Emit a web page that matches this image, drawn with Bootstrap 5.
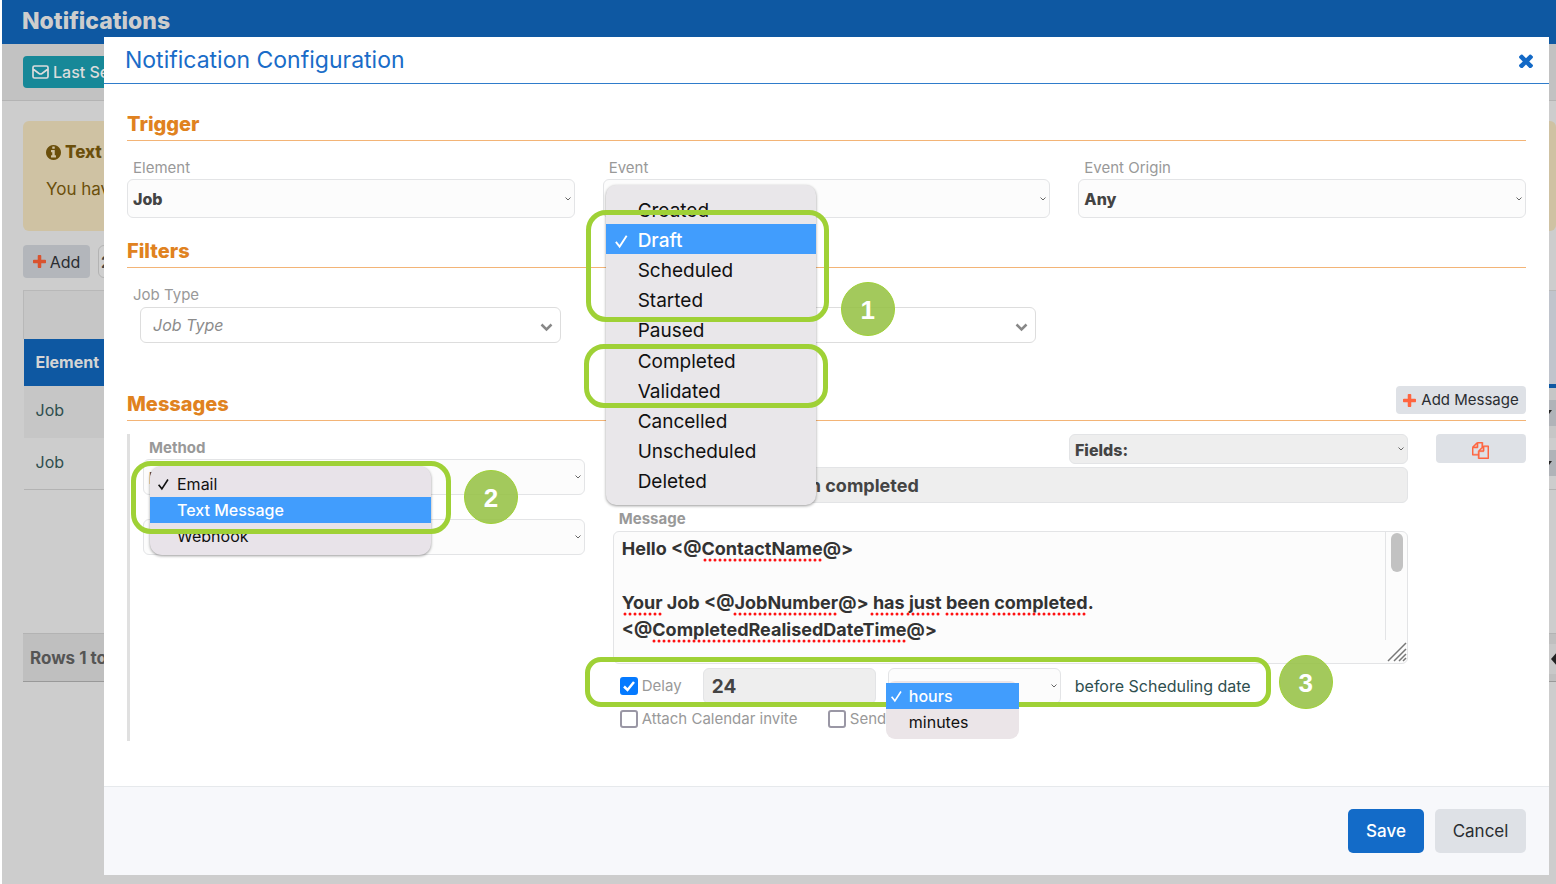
<!DOCTYPE html>
<html lang="en">
<head>
<meta charset="utf-8">
<meta name="viewport" content="width=device-width, initial-scale=1">
<title>Notifications</title>
<link href="https://cdn.jsdelivr.net/npm/bootstrap@5.3.0/dist/css/bootstrap.min.css" rel="stylesheet">
<style>
  body { font-family: Inter, "Liberation Sans", sans-serif; font-size: 16px; background: #fff; color: #2f4f4f; }
  .page { min-height: 100vh; margin-left: 2px; background: #cdcdcd; position: relative; overflow: hidden; }
  .fa-ico { fill: currentColor; flex: none; }

  /* page behind the dialog */
  .top-bar { height: 44px; background: #0e58a2; color: #cdcdcd; padding: 0 20px; font-size: 23px; font-weight: 800; line-height: 42px; }
  .tool-bar { height: 57px; background: #c2c2c2; border-bottom: 1px solid #b4b4b4; padding: 12px 21px; }
  .btn-teal { background: #178898; color: #dcdcdc; height: 32px; padding: 0 9px; border: 0; border-radius: 4px; font-size: 16px; font-weight: 500; }
  .btn-teal:hover { background: #178898; color: #dcdcdc; }
  .notice { margin: 20px 0 0 21px; height: 110px; padding: 18px 23px; background: #cfc2a3; color: #6b4f0b; border-radius: 6px; font-size: 17px; line-height: 26px; }
  .notice p { margin: 11px 0 0; }
  .notice strong { font-weight: 800; }
  .actions { margin: 14px 0 0 21px; height: 33px; }
  .btn-add { background: #b3b6bb; color: #2a2d31; height: 33px; width: 67px; padding: 0; border: 0; border-radius: 4px; font-size: 16px; }
  .page-size { width: 60px; height: 33px; border: 1px solid #b3b3b3; border-radius: 6px; background: #cfcfcf; color: #444; font-size: 16px; font-weight: 700; padding: 0 2px; }
  .grid-table { margin: 12px 0 0; border-collapse: collapse; width: 100%; table-layout: fixed; }
  .grid-wrap { padding-left: 21px; }
  .grid-table th, .grid-table td { padding: 0 12px; height: 52px; }
  .grid-table td { padding-bottom: 3px; }
  .grid-table .groups th { height: 48px; background: #c6c6c6; border-top: 1px solid #b8b8b8; border-left: 1px solid #b8b8b8; }
  .grid-table .heads th { height: 47px; background: #0e58a2; color: #d4d4d4; font-weight: 700; font-size: 16px; }
  .grid-table .heads th.edge, .grid-table .groups th.edge { background: #c0c4cc; }
  .grid-table .heads th.edge { border-bottom: 4px solid #0e58a2; }
  .grid-table tbody tr:first-child td { background: #c6c6c6; }
  .grid-table tbody tr:last-child td { border-bottom: 1px solid #b3b3b3; }
  .grid-table .edge { width: 8px; padding: 0; }
  .row-btn { display: block; width: 8px; height: 26px; padding: 0; border: 0; background: #b0b3b8; }
  .row-btn svg, .pager svg { display: block; fill: #222; }
  .grid-foot { margin: 143px 0 0 21px; height: 49px; padding: 2px 0 0 7px; background: #bfbfbf; border-top: 1px solid #b3b3b3; border-bottom: 1px solid #999; color: #555; font-size: 17px; font-weight: 700; }
  .pager { border: 0; background: #c8c8c8; width: 7px; height: 30px; padding: 0; }

  /* dialog */
  .dialog-layer { position: absolute; top: 0; left: 0; width: 100%; padding: 37px 7px 9px 102px; z-index: 10; }
  .dialog-box { background: #fff; }
  .dialog-head { height: 47px; padding: 0 16px 0 21px; border-bottom: 1px solid #2f7ccb; color: #1a6cc8; }
  .dialog-head h1 { font-size: 23px; font-weight: 400; line-height: 46px; margin: 0; }
  .close-btn { border: 0; background: none; color: #1369c6; padding: 0; width: 15px; height: 18px; line-height: 1; }
  .dialog-main { padding: 26px 23px 45px; }
  .sect-head { border-bottom: 1px solid #f3b476; padding-bottom: 2px; height: 31px; }
  .sect-filters { margin-top: 19px; }
  .sect-messages { margin-top: 47px; }
  .sect-head h2 { color: #e08220; font-size: 20px; font-weight: 800; line-height: 28px; margin: 0; }
  .cols-3 { display: grid; grid-template-columns: repeat(3, minmax(0, 1fr)); gap: 28px; margin-top: 17px; }
  .lbl { display: block; font-size: 15px; line-height: 20px; color: #999; margin: 0 0 1px 6px; }
  .field-box { position: relative; }
  .ctl { display: block; width: 100%; height: 36px; border: 1px solid #e3e4e6; border-radius: 6px; background-color: #fcfcfc; color: #444; font-size: 16px; font-weight: 800; padding: 1px 5px 0; appearance: none; }
  select.ctl { background-image: url("data:image/svg+xml,%3Csvg xmlns='http://www.w3.org/2000/svg' viewBox='0 0 6 4'%3E%3Cpath d='M.5.5 3 3 5.5.5' fill='none' stroke='%23666'/%3E%3C/svg%3E"); background-repeat: no-repeat; background-position: right 3px center; background-size: 6px 4px; }
  .ctl-tall { height: 39px; }
  .ctl-gray { background-color: #eee; }
  select.ctl.ctl-pick { margin: 2px 14px 0 13px; width: calc(100% - 27px); border-color: #ddd; background-color: #fff; color: #8c8c8c; font-style: italic; font-weight: 400; font-size: 16px; padding: 0 12px; background-position: right 7px top 15px; background-size: 13px 9px; background-image: url("data:image/svg+xml,%3Csvg xmlns='http://www.w3.org/2000/svg' viewBox='0 0 13 9'%3E%3Cpath d='M1.500 1.500 6.500 6.500 11.500 1.500' fill='none' stroke='%23888' stroke-width='2.500'/%3E%3C/svg%3E"); }
  .btn-soft { background: #dee1e6; color: #2a2d31; border: 0; border-radius: 4px; padding: 0; font-size: 16px; }
  .btn-soft:hover { background: #dee1e6; }
  .coral { color: #ff6540; }
  .add-msg { width: 130px; height: 28px; margin-top: -4px; font-size: 15px; gap: 5px; }
  .copy-btn { width: 90px; height: 29px; }
  .copy-btn.coral { color: #ff6540; }

  .msg-card { display: grid; grid-template-columns: minmax(0, 5fr) minmax(0, 9fr) 90px; column-gap: 28px; margin-top: 13px; border-left: 3px solid #e0e0e0; padding-left: 13px; height: 307px; }
  .fields-select { width: 339px; height: 30px; margin-left: auto; }
  .subject { margin-top: 3px; padding: 0 8px; font-size: 18px; font-weight: 700; }
  .msg-lbl { margin-top: 6px; }
  .text-wrap { position: relative; display: flex; height: 133px; border: 1px solid #e3e4e6; border-radius: 6px; background: #fcfcfc; margin-top: 2px; }
  .text-wrap textarea { flex: 1; border: 0; outline: 0; resize: none; overflow: hidden; background: none; padding: 3px 8px; color: #333; font-size: 18px; font-weight: 700; line-height: 27px; }
  .scroll-lane { width: 22px; height: 108px; border-left: 1px solid #e3e4e6; padding: 1px 5px; }
  .scroll-thumb { width: 12px; height: 39px; border-radius: 6px; background: #c2c2c2; }
  .over { position: absolute; }
  .grip { right: 0; bottom: 1px; }
  .spell { left: 0; top: 0; stroke: #f11; stroke-width: 3; stroke-linecap: round; stroke-dasharray: 0 5; pointer-events: none; }
  .delay-row { position: relative; display: flex; align-items: center; margin-top: 4px; height: 35px; padding-left: 7px; }
  .delay-row .ctl { flex: none; width: 173px; }
  .delay-lbl { width: 61px; }
  .delay-row .delay-num { font-size: 19px; font-weight: 700; padding: 1px 8px 0; }
  .unit-box { margin: 0 14px 0 12px; }
  .unit-box select.ctl { padding-top: 11px; }
  .before { white-space: nowrap; }
  .check-row { display: flex; align-items: center; margin-top: 6px; padding-left: 7px; height: 20px; }
  .attach-lbl { width: 186px; }
  .tick { appearance: none; width: 18px; height: 18px; margin: 0 4px 0 0; border: 2px solid #9a97a5; border-radius: 3px; background: #fff; flex: none; }
  .tick:checked { border-color: #057aff; background: #057aff url("data:image/svg+xml,%3Csvg xmlns='http://www.w3.org/2000/svg' viewBox='0 0 14 14'%3E%3Cpath d='m2 7.500 3.500 3.500L12 3' fill='none' stroke='%23fff' stroke-width='2.500'/%3E%3C/svg%3E") center/14px no-repeat; }
  .tick-lbl { font-size: 15px; line-height: 20px; color: #999; }

  /* open option lists */
  .pop { position: absolute; z-index: 5; margin: 0; list-style: none; background: #e8e3e9; color: #111; box-shadow: 0 1px 3px rgba(0,0,0,.4); display: flex; flex-direction: column; }
  .pop li { flex: 1; display: flex; align-items: center; white-space: nowrap; }
  .pop .on { background: #419dfd; color: #fff; font-weight: 500; }
  .pop svg { fill: none; stroke: currentColor; stroke-width: 2; flex: none; }
  .pop .gap-ico { flex: none; }
  .pop-event { left: 3px; top: 6px; width: 210px; height: 320px; padding: 9px 0; border-radius: 10px; background: #e9e7ea; font-size: 19px; line-height: 26px; }
  .pop-event li { padding-top: 3px; }
  .pop-event .gap-ico { width: 32px; padding-left: 8px; }
  .pop-method { left: 7px; top: 7px; width: 281px; height: 89px; padding: 5px 0 6px; border-radius: 12px; font-size: 16px; }
  .pop-method .gap-ico { width: 27px; padding-left: 7px; }
  .pop-unit { left: -2px; top: 13px; width: 133px; height: 58px; padding: 2px 0 4px; border-radius: 9px; background: #ebe5e8; font-size: 16px; box-shadow: none; }
  .pop-unit .gap-ico { width: 23px; padding-left: 4px; }

  /* numbered callouts */
  .ring { position: absolute; z-index: 6; border: 5px solid #9fd136; border-radius: 20px; pointer-events: none; }
  .num { position: absolute; z-index: 6; width: 54px; height: 54px; border: 1px solid #9fd136; border-radius: 50%; background: rgba(150,193,70,.88); color: #fff; font: 700 26px/54px "Liberation Sans", sans-serif; text-align: center; }
  .ring-a { left: -17px; top: 31px; width: 243px; height: 112px; }
  .ring-b { left: -19px; top: 165px; width: 244px; height: 64px; }
  .num-1 { left: 238px; top: 103px; }
  .ring-c { left: -12px; top: 2px; width: 320px; height: 73px; }
  .num-2 { left: 321px; top: 11px; }
  .ring-d { left: -28px; top: -11px; width: 686px; height: 50px; border-radius: 16px; z-index: 4; }
  .num-3 { left: 666px; top: -13px; }

  .dialog-foot { height: 89px; border-top: 1px solid #e6e9ec; background: #f7f8fb; padding: 0 23px; gap: 11px; }
  .foot-btn { height: 44px; border: 0; border-radius: 5px; padding: 1px 0 0; font-size: 17px; }
  .save { width: 76px; background: #136bc8; color: #fff; font-weight: 500; }
  .cancel { width: 91px; background: #dee1e6; color: #2a2d31; }
</style>
</head>
<body>
<svg class="d-none">
  <symbol id="plus" viewBox="192 128 1408 1408"><path d="M1600 736v192q0 40-28 68t-68 28h-416v416q0 40-28 68t-68 28h-192q-40 0-68-28t-28-68v-416h-416q-40 0-68-28t-28-68v-192q0-40 28-68t68-28h416v-416q0-40 28-68t68-28h192q40 0 68 28t28 68v416h416q40 0 68 28t28 68z"/></symbol>
  <symbol id="tickmark" viewBox="0 0 16 16"><path d="M2 9l4 5L13.500 2.500"/></symbol>
</svg>

<div class="page">
  <header class="top-bar">Notifications</header>
  <div class="tool-bar">
    <button type="button" class="btn btn-teal d-inline-flex align-items-center gap-1">
      <svg class="fa-ico" width="17" height="14" viewBox="0 0 17 14"><path d="M1 2.500Q1 1 2.500 1h12Q16 1 16 2.500v9q0 1.500-1.500 1.500h-12Q1 13 1 11.500zM1 4l6 4.500q1.500 1 3 0L16 4" fill="none" stroke="currentColor" stroke-width="1.700"/></svg>
      Last Sent
    </button>
  </div>
  <div class="notice">
    <div class="d-flex align-items-center gap-1">
      <svg class="fa-ico" width="15" height="15" viewBox="128 128 1536 1536"><path d="M1152 1376v-160q0-14-9-23t-23-9h-96v-512q0-14-9-23t-23-9h-320q-14 0-23 9t-9 23v160q0 14 9 23t23 9h96v320h-96q-14 0-23 9t-9 23v160q0 14 9 23t23 9h448q14 0 23-9t9-23zm-128-896v-160q0-14-9-23t-23-9h-192q-14 0-23 9t-9 23v160q0 14 9 23t23 9h192q14 0 23-9t9-23zm640 416q0 209-103 385.500t-279.500 279.500-385.500 103-385.500-103-279.500-279.500-103-385.500 103-385.500 279.500-279.500 385.500-103 385.500 103 279.500 279.500 103 385.500z"/></svg>
      <strong>Text</strong>
    </div>
    <p>You have</p>
  </div>
  <div class="actions d-flex gap-2">
    <button type="button" class="btn btn-add d-flex align-items-center justify-content-center gap-1"><svg class="fa-ico" style="color:#d9532f" width="13" height="13"><use href="#plus"/></svg>Add</button>
    <input class="page-size" value="25" aria-label="Rows per page">
  </div>
  <div class="grid-wrap">
    <table class="grid-table">
      <thead>
        <tr class="groups"><th></th><th class="edge"></th></tr>
        <tr class="heads"><th>Element</th><th class="edge"></th></tr>
      </thead>
      <tbody>
        <tr><td>Job</td><td class="edge"><button type="button" class="row-btn" aria-label="Row actions"><svg width="8" height="5" viewBox="0 0 8 5"><path d="M-2 0h6L1 4z"/></svg></button></td></tr>
        <tr><td>Job</td><td class="edge"><button type="button" class="row-btn" aria-label="Row actions"><svg width="8" height="5" viewBox="0 0 8 5"><path d="M-2 0h6L1 4z"/></svg></button></td></tr>
      </tbody>
    </table>
  </div>
  <div class="grid-foot d-flex align-items-center justify-content-between">Rows 1 to
    <button type="button" class="pager" aria-label="Previous page"><svg width="7" height="14" viewBox="0 0 7 14"><path d="M2 7l6-7v14z"/></svg></button>
  </div>

  <div class="dialog-layer">
    <form class="dialog-box" role="dialog" aria-labelledby="dlg-title">
      <div class="dialog-head d-flex align-items-center justify-content-between">
        <h1 id="dlg-title">Notification Configuration</h1>
        <button type="button" class="close-btn" aria-label="Close"><svg class="fa-ico" width="14" height="14" viewBox="302 434 1188 1188"><path transform="translate(0 100)" d="M1490 1322q0 40-28 68l-136 136q-28 28-68 28t-68-28l-294-294-294 294q-28 28-68 28t-68-28l-136-136q-28-28-28-68t28-68l294-294-294-294q-28-28-28-68t28-68l136-136q28-28 68-28t68 28l294 294 294-294q28-28 68-28t68 28l136 136q28 28 28 68t-28 68l-294 294 294 294q28 28 28 68z"/></svg></button>
      </div>

      <div class="dialog-main">
        <div class="sect-head"><h2>Trigger</h2></div>
        <div class="cols-3">
          <div>
            <label class="lbl" for="element">Element</label>
            <select id="element" class="ctl ctl-tall"><option>Job</option></select>
          </div>
          <div>
            <label class="lbl" for="event">Event</label>
            <div class="field-box">
              <select id="event" class="ctl ctl-tall"><option>Draft</option></select>
              <ul class="pop pop-event" role="listbox" aria-label="Event">
                <li><span class="gap-ico"></span>Created</li>
                <li class="on"><span class="gap-ico d-flex"><svg width="15" height="16"><use href="#tickmark"/></svg></span>Draft</li>
                <li><span class="gap-ico"></span>Scheduled</li>
                <li><span class="gap-ico"></span>Started</li>
                <li><span class="gap-ico"></span>Paused</li>
                <li><span class="gap-ico"></span>Completed</li>
                <li><span class="gap-ico"></span>Validated</li>
                <li><span class="gap-ico"></span>Cancelled</li>
                <li><span class="gap-ico"></span>Unscheduled</li>
                <li><span class="gap-ico"></span>Deleted</li>
              </ul>
              <div class="ring ring-a"></div>
              <div class="ring ring-b"></div>
              <div class="num num-1">1</div>
            </div>
          </div>
          <div>
            <label class="lbl" for="origin">Event Origin</label>
            <select id="origin" class="ctl ctl-tall"><option>Any</option></select>
          </div>
        </div>

        <div class="sect-head sect-filters"><h2>Filters</h2></div>
        <div class="cols-3">
          <div>
            <label class="lbl" for="jobtype">Job Type</label>
            <select id="jobtype" class="ctl ctl-pick"><option>Job Type</option></select>
          </div>
          <div>
            <label class="lbl" for="filter2">&nbsp;</label>
            <select id="filter2" class="ctl ctl-pick" aria-label="Second filter"><option></option></select>
          </div>
        </div>

        <div class="sect-head sect-messages d-flex justify-content-between">
          <h2>Messages</h2>
          <button type="button" class="btn-soft add-msg d-flex align-items-center justify-content-center"><svg class="fa-ico coral" width="13" height="13"><use href="#plus"/></svg>Add Message</button>
        </div>

        <div class="msg-card">
          <div class="pt-1">
            <label class="lbl fw-bold" for="method">Method</label>
            <div class="field-box">
              <select id="method" class="ctl"><option>Email</option></select>
              <ul class="pop pop-method" role="listbox" aria-label="Method">
                <li><span class="gap-ico d-flex"><svg width="13" height="14"><use href="#tickmark"/></svg></span>Email</li>
                <li class="on"><span class="gap-ico"></span>Text Message</li>
                <li><span class="gap-ico"></span>Webhook</li>
              </ul>
              <div class="ring ring-c"></div>
              <div class="num num-2">2</div>
            </div>
            <select class="ctl mt-4" aria-label="Recipient"><option></option></select>
          </div>

          <div>
            <select class="ctl ctl-gray fields-select" aria-label="Fields"><option>Fields:</option></select>
            <input class="ctl ctl-gray subject" value="Your Job has just been completed" aria-label="Subject">
            <label class="lbl fw-bold msg-lbl" for="message">Message</label>
            <div class="text-wrap">
              <textarea id="message" spellcheck="false">Hello &lt;@ContactName@&gt;

Your Job &lt;@JobNumber@&gt; has just been completed.
&lt;@CompletedRealisedDateTime@&gt;</textarea>
              <div class="scroll-lane"><div class="scroll-thumb"></div></div>
              <svg class="over spell" width="500" height="120"><path d="M91 28H209M11 82H48M121 82H222M258 82H289M294 82H325M333 82H374M380 82H473M40 109H294"/></svg>
              <svg class="over grip" width="20" height="20" viewBox="0 0 20 20"><path d="M1 19 19 1M7 19 19 7M12 19l7-7M16 19l3-3" stroke="#777" stroke-width="1.500"/></svg>
            </div>

            <div class="delay-row">
              <input type="checkbox" class="tick" id="delay" checked>
              <label class="tick-lbl delay-lbl" for="delay">Delay</label>
              <input class="ctl ctl-gray delay-num" value="24" aria-label="Delay amount">
              <div class="field-box unit-box">
                <select class="ctl" aria-label="Delay unit"><option>hours</option></select>
                <ul class="pop pop-unit" role="listbox" aria-label="Delay unit">
                  <li class="on"><span class="gap-ico d-flex"><svg width="13" height="14"><use href="#tickmark"/></svg></span>hours</li>
                  <li><span class="gap-ico"></span>minutes</li>
                </ul>
              </div>
              <span class="before">before Scheduling date</span>
              <div class="ring ring-d"></div>
              <div class="num num-3">3</div>
            </div>
            <div class="check-row">
              <input type="checkbox" class="tick" id="attach">
              <label class="tick-lbl attach-lbl" for="attach">Attach Calendar invite</label>
              <input type="checkbox" class="tick" id="send">
              <label class="tick-lbl" for="send">Send</label>
            </div>
          </div>

          <div>
            <button type="button" class="btn-soft copy-btn coral" aria-label="Duplicate message"><svg class="fa-ico" width="17" height="17" viewBox="0 0 1792 1792" stroke="currentColor" stroke-width="50"><path d="M1696 384q40 0 68 28t28 68v1216q0 40-28 68t-68 28h-960q-40 0-68-28t-28-68v-288h-544q-40 0-68-28t-28-68v-672q0-40 20-88t48-76l408-408q28-28 76-48t88-20h416q40 0 68 28t28 68v328q68-40 128-40h416zm-544 213l-299 299h299v-299zm-640-384l-299 299h299v-299zm196 647l316-316v-416h-384v416q0 40-28 68t-68 28h-416v640h512v-256q0-40 20-88t48-76zm956 804v-1152h-384v416q0 40-28 68t-68 28h-416v640h896z"/></svg></button>
          </div>
        </div>
      </div>

      <div class="dialog-foot d-flex align-items-center justify-content-end">
        <button type="submit" class="foot-btn save">Save</button>
        <button type="button" class="foot-btn cancel">Cancel</button>
      </div>
    </form>
  </div>
</div>

<script src="https://cdn.jsdelivr.net/npm/bootstrap@5.3.0/dist/js/bootstrap.bundle.min.js"></script>
</body>
</html>
